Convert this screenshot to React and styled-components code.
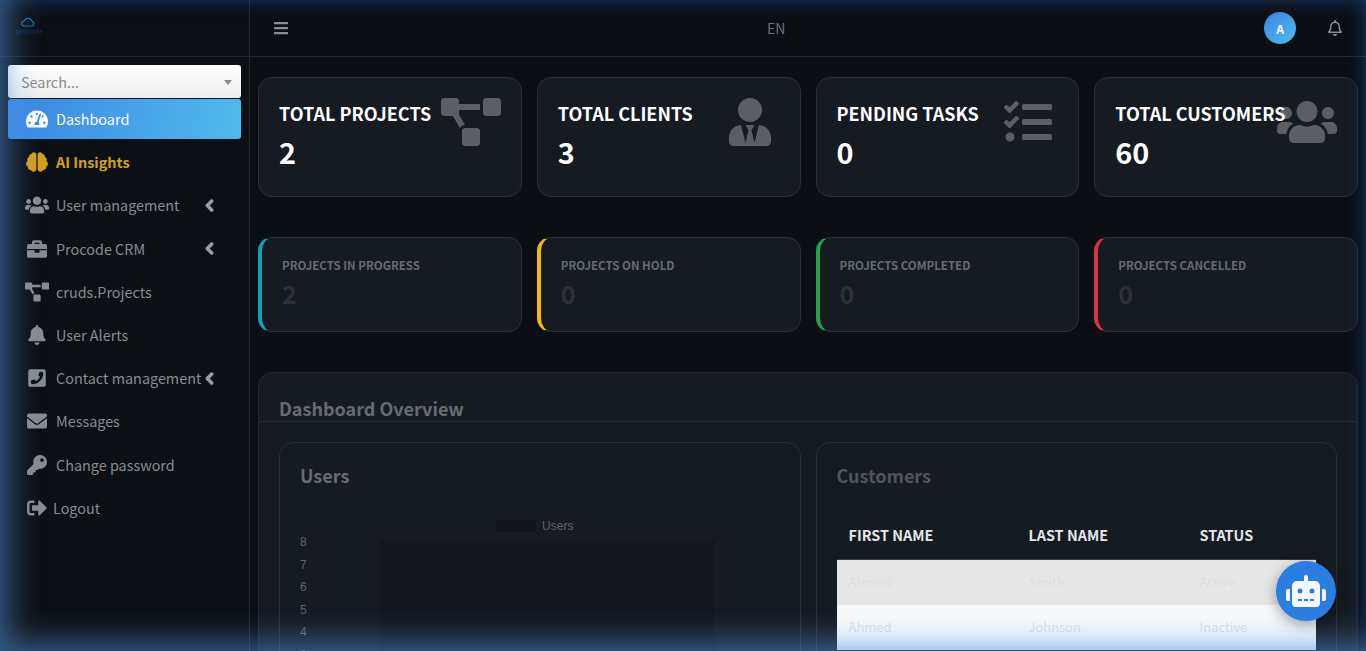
import React from 'react';
import styled, { createGlobalStyle } from 'styled-components';
import {
  FaBars, FaBell, FaBrain, FaBriefcase, FaChevronLeft, FaEnvelope, FaKey, FaPhoneSquare,
  FaProjectDiagram, FaRegBell, FaRobot, FaSignOutAlt, FaTachometerAlt, FaTasks, FaUsers, FaUserTie,
} from 'react-icons/fa';

const FONT = '"Noto Sans CJK SC", "Noto Sans", sans-serif';

const GlobalStyle = createGlobalStyle`
  html, body {
    margin: 0;
    height: 100%;
    overflow: hidden;
    background: #0b0e13;
  }
  * { box-sizing: border-box; }
  body { font-family: ${FONT}; }
`;

const Shell = styled.div`
  display: flex;
  height: 100vh;
  overflow: hidden;
  background: #0b0e13;
`;

// blue glow sitting over the whole window
const Glow = styled.div`
  position: fixed;
  inset: 0;
  z-index: 50;
  pointer-events: none;
  box-shadow: inset 12px -12px 30px rgba(100, 175, 245, 0.42), inset 0 0 20px rgba(15, 60, 145, 0.4);
`;

const Sidebar = styled.aside`
  flex: 0 0 250px;
  width: 250px;
  min-width: 0;
  border-right: 1px solid #24282e;
  background: #0c0f14;
`;

const Brand = styled.div`
  height: 57px;
  padding: 16px 0 0 16px;
  border-bottom: 1px solid #1f2328;
`;

const BrandName = styled.div`
  width: 24px;
  font-size: 7px;
  line-height: 7px;
  text-align: center;
  color: #0f3360;
`;

const BrandMark = styled.svg`
  display: block;
  width: 16px;
  height: 12px;
  margin-left: 4px;
`;

const SidePad = styled.div`
  padding: 8px 8px 0;
`;

const SearchBox = styled.div`
  position: relative;
  height: 33px;
  border-radius: 3px;
  background: linear-gradient(180deg, #ffffff, #eeeeee);
  &::after {
    content: '';
    position: absolute;
    right: 9px;
    top: 15px;
    border-left: 4px solid transparent;
    border-right: 4px solid transparent;
    border-top: 5px solid #888;
  }
`;

const SearchInput = styled.input`
  width: 100%;
  height: 100%;
  padding: 0 24px 0 13px;
  border: 0;
  outline: 0;
  background: transparent;
  font-family: ${FONT};
  font-size: 14.4px;
  &::placeholder { color: #8a8a8a; opacity: 1; }
`;

const NavList = styled.nav`
  display: flex;
  flex-direction: column;
  gap: 3.2px;
  margin-top: 1px;
`;

const NavItem = styled.a`
  display: flex;
  align-items: center;
  height: 40px;
  padding: 0 25px 0 14px;
  border-radius: 3px;
  font-size: 14.4px;
  line-height: 18px;
  font-weight: ${(p) => (p.$tone === 'gold' ? 700 : 400)};
  white-space: nowrap;
  color: ${(p) => (p.$tone === 'gold' ? '#d3a01f' : p.$active ? '#ffffff' : '#878c92')};
  background: ${(p) => (p.$active ? 'linear-gradient(100deg, #3a86e2, #50bbef)' : 'transparent')};
`;

const NavIcon = styled.span`
  flex: 0 0 30px;
  display: flex;
  justify-content: center;
  margin-right: ${(p) => (p.$tight ? '1px' : '4px')};
  font-size: ${(p) => p.$size || 20}px;
`;

const NavArrow = styled(FaChevronLeft)`
  flex: none;
  margin-left: auto;
  font-size: 13px;
  color: #9a9ea3;
  stroke-width: 60px;
`;

const Main = styled.div`
  flex: 1;
  min-width: 0;
`;

const Topbar = styled.header`
  display: flex;
  align-items: center;
  height: 57px;
  padding: 0 23px;
  border-bottom: 1px solid #24282e;
  color: #8a8e93;
`;

const Lang = styled.span`
  margin-left: 478px;
  font-size: 14px;
  color: #6c7075;
`;

const TopRight = styled.div`
  display: flex;
  align-items: center;
  gap: 31px;
  margin-left: auto;
`;

const Avatar = styled.div`
  display: flex;
  align-items: center;
  justify-content: center;
  width: 32px;
  height: 32px;
  border-radius: 50%;
  background: linear-gradient(135deg, #3a86e2, #50bbef);
  font-size: 12px;
  font-weight: 700;
  color: #fff;
`;

const Content = styled.main`
  display: flex;
  flex-direction: column;
  padding: 20px 8px 0;
`;

const CardRow = styled.section`
  display: grid;
  grid-template-columns: repeat(4, 1fr);
  gap: 15px;
  margin-bottom: 40px;
`;

const StatCard = styled.div`
  position: relative;
  height: 120px;
  padding: 20px 20px;
  border: 1px solid #2a2f36;
  border-radius: 14px;
  background: #161b22;
  color: #fff;
`;

const StatTitle = styled.div`
  position: relative;
  font-size: 18px;
  line-height: 30px;
  font-weight: 700;
  white-space: nowrap;
`;

const StatValue = styled.div`
  font-size: 28.8px;
  line-height: 48px;
  font-weight: 700;
`;

const StatIcon = styled.div`
  position: absolute;
  top: 20px;
  right: 20px;
  display: flex;
  align-items: center;
  justify-content: center;
  width: 60px;
  height: 48px;
  font-size: ${(p) => p.$size || 48}px;
  color: #5b5f64;
`;

const SmallCard = styled.div`
  height: 95px;
  padding: 19px 20px;
  border: 1px solid #2a2f36;
  border-left: 4px solid ${(p) => p.$accent};
  border-radius: 14px;
  background: #161b22;
`;

const SmallTitle = styled.div`
  font-size: 11.5px;
  line-height: 17px;
  font-weight: 700;
  white-space: nowrap;
  color: #666b71;
`;

const SmallValue = styled.div`
  margin-top: 1px;
  font-size: 25.2px;
  line-height: 36px;
  font-weight: 700;
  color: #2b3037;
`;

const Overview = styled.section`
  border: 1px solid #23282f;
  border-radius: 14px;
  background: #161b22;
`;

const OverviewHead = styled.h2`
  height: 49px;
  margin: 0;
  padding: 22px 20px 0;
  border-bottom: 1px solid #262b32;
  font-size: 18px;
  line-height: 26px;
  font-weight: 700;
  color: #666c72;
`;

const OverviewBody = styled.div`
  display: grid;
  grid-template-columns: 1fr 1fr;
  gap: 15px;
  padding: 20px;
`;

const Panel = styled.div`
  height: 400px;
  padding: 19px 20px;
  border: 1px solid #2a2f36;
  border-radius: 14px;
`;

const PanelTitle = styled.h3`
  margin: 0;
  font-size: 18px;
  line-height: 26px;
  font-weight: 700;
  color: ${(p) => p.$color};
`;

const Legend = styled.div`
  display: flex;
  align-items: center;
  justify-content: center;
  gap: 6px;
  margin-top: 31px;
  padding-right: 10px;
  font-family: "Liberation Sans", sans-serif;
  font-size: 12px;
  line-height: 14px;
  color: #5f6368;
`;

const LegendSwatch = styled.span`
  width: 40px;
  height: 12px;
  background: #11151a;
`;

const ChartBody = styled.div`
  display: grid;
  grid-template-columns: 80px 335px;
  margin-top: -2px;
`;

const YAxis = styled.div`
  font-family: "Liberation Sans", sans-serif;
  font-size: 12px;
  line-height: 22.6px;
  color: #5f6368;
`;

const Plot = styled.div`
  margin-top: 10px;
  height: 300px;
  background: #13171d;
`;

const Table = styled.div`
  margin-top: 24px;
`;

const TableRow = styled.div`
  display: grid;
  grid-template-columns: 180px 171px 1fr;
  align-items: center;
  height: 45px;
  padding: 0 0 2px 12px;
  font-size: 12.96px;
  color: ${(p) => p.$text};
  background: ${(p) => p.$bg};
`;

const TableHead = styled(TableRow)`
  height: 48px;
  font-size: 14.4px;
  font-weight: 700;
  color: #e4e6e8;
  border-bottom: 1px solid #33383e;
`;

const ChatButton = styled.button`
  position: fixed;
  right: 30px;
  bottom: 30px;
  z-index: 60;
  display: flex;
  align-items: center;
  justify-content: center;
  width: 60px;
  height: 60px;
  padding: 0;
  border: 0;
  border-radius: 50%;
  background: #2a7de1;
  color: #f4f8fe;
  font-size: 40px;
  box-shadow: 0 4px 14px rgba(0, 0, 0, 0.35);
`;

const nav = [
  { label: 'Dashboard', icon: FaTachometerAlt, size: 22, active: true },
  { label: 'AI Insights', icon: FaBrain, size: 22, tone: 'gold' },
  { label: 'User management', icon: FaUsers, size: 24, arrow: true },
  { label: 'Procode CRM', icon: FaBriefcase, arrow: true },
  { label: 'cruds.Projects', icon: FaProjectDiagram, size: 24 },
  { label: 'User Alerts', icon: FaBell },
  { label: 'Contact management', icon: FaPhoneSquare, arrow: true },
  { label: 'Messages', icon: FaEnvelope },
  { label: 'Change password', icon: FaKey },
  { label: 'Logout', icon: FaSignOutAlt, tight: true },
];

const stats = [
  { title: 'TOTAL PROJECTS', value: 2, icon: FaProjectDiagram, size: 60 },
  { title: 'TOTAL CLIENTS', value: 3, icon: FaUserTie },
  { title: 'PENDING TASKS', value: 0, icon: FaTasks },
  { title: 'TOTAL CUSTOMERS', value: 60, icon: FaUsers, size: 60 },
];

const progress = [
  { title: 'PROJECTS IN PROGRESS', value: 2, accent: '#12a0b5' },
  { title: 'PROJECTS ON HOLD', value: 0, accent: '#f5b90a' },
  { title: 'PROJECTS COMPLETED', value: 0, accent: '#22a447' },
  { title: 'PROJECTS CANCELLED', value: 0, accent: '#d93546' },
];

const Logo = () => (
  <BrandMark viewBox="0 0 26 16" fill="none" stroke="#1c6fc0" strokeWidth="1.8">
    <path d="M7 14.5h12a3.8 3.8 0 0 0 .6-7.5 6.8 6.8 0 0 0-12.8-.6A4 4 0 0 0 7 14.5z" />
  </BrandMark>
);

const App = () => {
  return (
    <Shell>
      <GlobalStyle />
      <Sidebar>
        <Brand>
          <Logo />
          <BrandName>procode</BrandName>
        </Brand>
        <SidePad>
          <SearchBox>
            <SearchInput placeholder="Search..." />
          </SearchBox>
          <NavList>
            {nav.map(({ label, icon: Icon, size, active, tone, arrow, tight }) => (
              <NavItem key={label} $active={active} $tone={tone}>
                <NavIcon $size={size} $tight={tight}><Icon /></NavIcon>
                {label}
                {arrow && <NavArrow />}
              </NavItem>
            ))}
          </NavList>
        </SidePad>
      </Sidebar>
      <Main>
        <Topbar>
          <FaBars size={16} />
          <Lang>EN</Lang>
          <TopRight>
            <Avatar>A</Avatar>
            <FaRegBell size={16} />
          </TopRight>
        </Topbar>
        <Content>
          <CardRow>
            {stats.map(({ title, value, icon: Icon, size }) => (
              <StatCard key={title}>
                <StatIcon $size={size}><Icon /></StatIcon>
                <StatTitle>{title}</StatTitle>
                <StatValue>{value}</StatValue>
              </StatCard>
            ))}
          </CardRow>
          <CardRow>
            {progress.map(({ title, value, accent }) => (
              <SmallCard key={title} $accent={accent}>
                <SmallTitle>{title}</SmallTitle>
                <SmallValue>{value}</SmallValue>
              </SmallCard>
            ))}
          </CardRow>
          <Overview>
            <OverviewHead>Dashboard Overview</OverviewHead>
            <OverviewBody>
              <Panel>
                <PanelTitle $color="#666c72">Users</PanelTitle>
                <Legend><LegendSwatch />Users</Legend>
                <ChartBody>
                  <YAxis>
                    {[8, 7, 6, 5, 4, 3].map((n) => <div key={n}>{n}</div>)}
                  </YAxis>
                  <Plot />
                </ChartBody>
              </Panel>
              <Panel>
                <PanelTitle $color="#50555b">Customers</PanelTitle>
                <Table>
                  <TableHead>
                    <span>FIRST NAME</span><span>LAST NAME</span><span>STATUS</span>
                  </TableHead>
                  <TableRow $bg="#e6e6e6" $text="#dddddd">
                    <span>Ahmed</span><span>Smith</span><span>Active</span>
                  </TableRow>
                  <TableRow $bg="#f9f9f9" $text="#dedede">
                    <span>Ahmed</span><span>Johnson</span><span>Inactive</span>
                  </TableRow>
                </Table>
              </Panel>
            </OverviewBody>
          </Overview>
        </Content>
      </Main>
      <ChatButton aria-label="Assistant"><FaRobot /></ChatButton>
      <Glow />
    </Shell>
  );
};

export default App;
